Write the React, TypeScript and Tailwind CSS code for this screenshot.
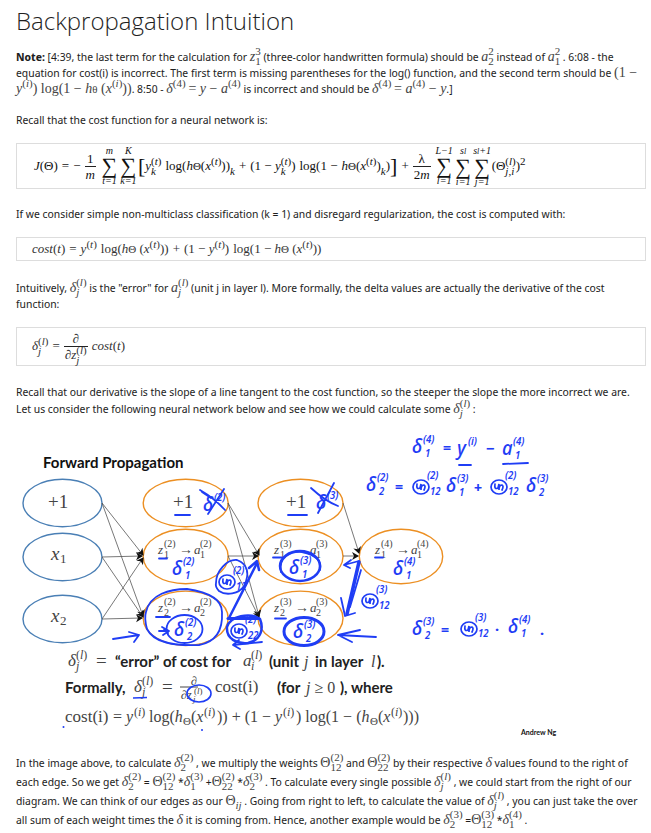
import React from "react";

const INK = "#1f3df5";
const MATH = '"Liberation Serif", serif';
const HAND = '"Noto Sans Display", "Open Sans", sans-serif';

/* ---------- inline maths ---------- */

function M({ children }: { children: React.ReactNode }) {
  return (
    <span className="whitespace-nowrap font-['Liberation_Serif',serif] text-[14px] leading-[0px] text-[#444]">{children}</span>
  );
}

function Scripts({ sup, sub }: { sup?: React.ReactNode; sub?: React.ReactNode }) {
  return (
    <span className="inline-flex h-3 flex-col justify-center pb-[3px] align-middle font-['Liberation_Serif',serif] text-[11px] leading-[10px]">
      <span className="h-[10px] shrink-0">{sup}</span>
      <span className="h-[10px] shrink-0">{sub}</span>
    </span>
  );
}

const L = (
  <>
    (<i>l</i>)
  </>
);
const T = (
  <>
    (<i>t</i>)
  </>
);
const I = (
  <>
    (<i>i</i>)
  </>
);

function Var({ v, sup, sub }: { v: string; sup?: React.ReactNode; sub?: React.ReactNode }) {
  return (
    <M>
      <i>{v}</i>
      <Scripts sup={sup} sub={sub} />
    </M>
  );
}

function Theta({ sup, sub }: { sup?: React.ReactNode; sub?: React.ReactNode }) {
  return (
    <M>
      Θ<Scripts sup={sup} sub={sub} />
    </M>
  );
}

function Small({ children }: { children: React.ReactNode }) {
  return <span className="text-[11px]">{children}</span>;
}

function Sum({ top, bottom }: { top: React.ReactNode; bottom: React.ReactNode }) {
  return (
    <span className="flex w-[19px] flex-col items-center whitespace-nowrap text-[10px] leading-[10px]">
      <i>{top}</i>
      <span className="text-[22px] leading-[20px]">∑</span>
      <i>{bottom}</i>
    </span>
  );
}

function Frac({ top, bottom }: { top: React.ReactNode; bottom: React.ReactNode }) {
  return (
    <span className="flex flex-col items-center leading-[15px]">
      <span className="w-full border-b border-[#222] text-center">{top}</span>
      <span className="px-px">{bottom}</span>
    </span>
  );
}

function Box({ children }: { children: React.ReactNode }) {
  return (
    <div className="flex items-center border border-[#ddd] pl-[15px] font-['Liberation_Serif',serif] whitespace-nowrap">
      {children}
    </div>
  );
}

/* ---------- slide drawing ---------- */

type P = { x: number; y: number };

function Printed({ x, y, v, sup, sub, large }: P & { v: string; sup: React.ReactNode; sub: string; large?: boolean }) {
  const dx = large ? 8 : 6;
  return (
    <g fill="#444" fontFamily={MATH}>
      <text x={x} y={y} fontSize={large ? 17 : 13} fontStyle="italic">{v}</text>
      <text x={x + dx} y={y - 7} fontSize={large ? 12 : 10}>{sup}</text>
      <text x={x + dx} y={y + 4} fontSize={large ? 12 : 10} fontStyle={large ? "italic" : "normal"}>{sub}</text>
    </g>
  );
}

function Unit({ x, y, layer, n }: P & { layer: string; n: string }) {
  return (
    <g>
      <Printed x={x} y={y} v="z" sup={layer} sub={n} />
      <text x={x + 21} y={y} fontSize={14} fill="#444" fontFamily={MATH}>→</text>
      <Printed x={x + 36} y={y} v="a" sup={layer} sub={n} />
    </g>
  );
}

function Hand({ x, y, v = "δ", sup, sub }: P & { v?: string; sup: string; sub?: string }) {
  return (
    <g fill={INK} fontFamily={HAND} fontStyle="italic" fontWeight={600}>
      <text x={x} y={y} fontSize={19} fontWeight={500}>{v}</text>
      <text x={x + 11} y={y - 10} fontSize={10}>{sup}</text>
      {sub && <text x={x + 13} y={y + 4} fontSize={10}>{sub}</text>}
    </g>
  );
}

function HandTheta({ x, y, sup, sub }: P & { sup: string; sub: string }) {
  return (
    <g fill={INK} fontFamily={HAND} fontStyle="italic" fontWeight={600}>
      <ellipse cx={x} cy={y} rx={8} ry={7} fill="none" stroke={INK} strokeWidth={1.7} />
      <path
        d={`M${x - 4} ${y - 3} q-1 6 3 4 l1 -4 l0 6 q0 -5 3 -5 q2 1 0 5`}
        fill="none"
        stroke={INK}
        strokeWidth={1.7}
        strokeLinecap="round"
      />
      <text x={x + 6} y={y - 8} fontSize={10}>{sup}</text>
      <text x={x + 9} y={y + 8} fontSize={10}>{sub}</text>
    </g>
  );
}

const wires = [
  [102, 503, 143, 555], [102, 503, 143, 616], [102, 557, 142, 556], [102, 557, 143, 617],
  [102, 619, 143, 558], [102, 619, 142, 618], [228, 503, 259, 555], [228, 503, 259, 616],
  [228, 556, 258, 556], [228, 556, 259, 617], [343, 503, 359, 553], [343, 556, 358, 556],
];

const supI = (
  <>
    (<tspan fontStyle="italic">i</tspan>)
  </>
);
const supL = (
  <>
    (<tspan fontStyle="italic">l</tspan>)
  </>
);

function Slide() {
  return (
    <svg viewBox="16 424 630 318" className="mt-[7px] block w-full" role="img" aria-label="Forward propagation network">
      <defs>
        <marker id="head" markerWidth="10" markerHeight="10" refX="7" refY="5" orient="auto" markerUnits="userSpaceOnUse">
          <path d="M1 1 L8 5 L1 9 L3 5 Z" fill="#111" />
        </marker>
      </defs>
      <text x={43} y={468} fontFamily="Lato, sans-serif" fontWeight={700} fontSize={15} fill="#111">Forward Propagation</text>

      <g fill="none" strokeWidth={1.4}>
        {[503, 557, 619].map((y) => (
          <ellipse key={y} cx={62.5} cy={y} rx={39.5} ry={23.7} stroke="#4a7fb5" />
        ))}
        <g stroke="#ec8f22">
          {[185.7, 300.5].map((x) => (
            <g key={x}>
              <ellipse cx={x} cy={503} rx={42.5} ry={23.7} />
              <ellipse cx={x} cy={556.5} rx={42.5} ry={27.2} />
              <ellipse cx={x} cy={618.3} rx={42.5} ry={27.2} />
            </g>
          ))}
          <ellipse cx={401} cy={556.5} rx={41.7} ry={27.2} />
        </g>
      </g>
      <g stroke="#555" strokeWidth={0.8}>
        {wires.map(([a, b, c, d], i) => (
          <line key={i} x1={a} y1={b} x2={c} y2={d} markerEnd="url(#head)" />
        ))}
      </g>

      <g fill="#444" fontFamily={MATH} fontSize={19}>
        <text x={48} y={508}>+1</text>
        <text x={173} y={508}>+1</text>
        <text x={286} y={508}>+1</text>
        <text x={51} y={560} fontStyle="italic">x</text>
        <text x={60} y={563} fontSize={13}>1</text>
        <text x={51} y={622} fontStyle="italic">x</text>
        <text x={60} y={625} fontSize={13}>2</text>
      </g>
      <Unit x={158} y={554} layer="(2)" n="1" />
      <Unit x={158} y={612} layer="(2)" n="2" />
      <Unit x={274} y={554} layer="(3)" n="1" />
      <Unit x={274} y={612} layer="(3)" n="2" />
      <Unit x={375} y={554} layer="(4)" n="1" />

      <g fill="none" stroke={INK} strokeWidth={1.8} strokeLinecap="round" strokeLinejoin="round">
        <path d="M175 515 H190 M288 515 H307 M159 558.500 H167 M156 617 H170 M273 557.500 H282 M275 618.500 H286 M375 557.500 H383" />
        {/* crossed-out bias terms */}
        <path d="M200 490 Q214 498 225 510 M202 492 L211 498 M224 489 L208 514 M311 488 Q325 501 338 506 M334 483 L318 513" />
        {/* second hidden unit */}
        <path d="M146 612 C150 594 170 589 187 589 C207 592 222 599 222 612 C223 631 216 642 199 645 C174 646 154 643 147 629 Q144 618 146 612" />
        <ellipse cx={184.5} cy={629} rx={18} ry={14} />
        <path d="M159 631 H169 M162 627 L169 631 L163 635 M164 629 L168 633" />
        <path d="M113 639 L139 635 M129 632 L139 635 L134 642" />
        {/* weights between the hidden layers */}
        <path d="M216 583 C216 571 227 559 237 560 C248 564 250 574 244 586 C239 594 226 596 219 591 Q215 587 216 583" />
        <path d="M229 618 L257 563 M249 568 L257 561 L259 570" strokeWidth={2.5} />
        <path d="M228 618.500 H259" strokeWidth={3} />
        <path d="M227 627 C230 616 250 612 260 619 C264 629 261 640 248 643 C237 644 226 639 227 627" strokeWidth={2.5} />
        <path d="M262 642 L233 645 M239 640 L233 645 L240 649" />
        {/* third layer */}
        <ellipse cx={300} cy={566} rx={20} ry={15} strokeWidth={2.5} />
        <path d="M281 572 C278 558 290 551 302 552 C317 555 322 562 320 570" />
        <ellipse cx={304} cy={631.5} rx={20} ry={14} strokeWidth={3} />
        <path d="M359 562 L347 614" strokeWidth={3.5} />
        <path d="M341 598 L345 616 L355 613 M344 565 L359 561 M351 560 L344 565 L350 568 M361 570 L350 607" />
        <path d="M376 637 L338 635 M360 630 L338 635 L352 642" />
        {/* worked equations */}
        <path d="M459 465 H471 M503 464 L528 463" />
      </g>

      <Hand x={203} y={511} sup="(2)" />
      <Hand x={316} y={509} sup="(3)" />
      <Hand x={172} y={575} sup="(2)" sub="1" />
      <Hand x={174} y={636} sup="(2)" sub="2" />
      <Hand x={289} y={574} sup="(3)" sub="1" />
      <Hand x={293} y={638} sup="(3)" sub="2" />
      <Hand x={393} y={575} sup="(4)" sub="1" />
      <HandTheta x={227} y={582} sup="(2)" sub="12" />
      <HandTheta x={239} y={631} sup="(2)" sub="22" />
      <HandTheta x={370} y={601} sup="(3)" sub="12" />

      <Hand x={412} y={453} sup="(4)" sub="1" />
      <Hand x={457} y={455} v="y" sup="(i)" />
      <Hand x={502} y={455} v="a" sup="(4)" sub="1" />
      <Hand x={366} y={491} sup="(2)" sub="2" />
      <HandTheta x={421} y={487} sup="(2)" sub="12" />
      <Hand x={446} y={492} sup="(3)" sub="1" />
      <HandTheta x={499} y={487} sup="(2)" sub="12" />
      <Hand x={526} y={492} sup="(3)" sub="2" />
      <Hand x={412} y={635} sup="(3)" sub="2" />
      <HandTheta x={469} y={629} sup="(3)" sub="12" />
      <Hand x={508} y={633} sup="(4)" sub="1" />
      <g fill={INK} fontFamily={HAND} fontWeight={700} fontSize={15}>
        <text x={443} y={453}>=</text>
        <text x={486} y={454}>−</text>
        <text x={395} y={492}>=</text>
        <text x={474} y={493}>+</text>
        <text x={441} y={635}>=</text>
        <text x={495} y={631}>.</text>
        <text x={540} y={635}>.</text>
      </g>

      {/* definitions under the network */}
      <g fontFamily="Lato, sans-serif" fontWeight={700} fontSize={15} fill="#222">
        <text x={115} y={667}>“error” of cost for</text>
        <text x={269} y={667}>(unit</text>
        <text x={315} y={667}>in layer</text>
        <text x={377} y={667}>).</text>
        <text x={65} y={693}>Formally,</text>
        <text x={277} y={693}>(for</text>
        <text x={340} y={693}>), where</text>
      </g>
      <g fontFamily={MATH} fontSize={16} fill="#444">
        <text x={96} y={667} fontSize={19}>=</text>
        <text x={304} y={667} fontStyle="italic">j</text>
        <text x={371} y={667} fontStyle="italic">l</text>
        <text x={162} y={693} fontSize={19}>=</text>
        <text x={215} y={692} fontSize={17}>cost(i)</text>
        <text x={306} y={693}><tspan fontStyle="italic">j</tspan> ≥ 0</text>
        <text x={191} y={685} fontSize={12}>∂</text>
        <text x={181} y={699} fontSize={12}>∂<tspan fontStyle="italic">z</tspan></text>
        <text x={194} y={694} fontSize={9}>{supL}</text>
        <text x={193} y={702} fontSize={9} fontStyle="italic">j</text>
        <text x={65} y={722} fontSize={17}>cost(i)</text>
        <text x={113} y={722}>=</text>
        <text x={126} y={722} fontStyle="italic">y</text>
        <text x={134} y={716} fontSize={12}>{supI}</text>
        <text x={149} y={722}>log(<tspan fontStyle="italic">h</tspan></text>
        <text x={183} y={725} fontSize={11}>Θ</text>
        <text x={191} y={722}>(<tspan fontStyle="italic">x</tspan></text>
        <text x={204} y={716} fontSize={12}>{supI}</text>
        <text x={217} y={722}>)) + (1 − <tspan fontStyle="italic">y</tspan></text>
        <text x={283} y={716} fontSize={12}>{supI}</text>
        <text x={296} y={722}>) log(1 − (<tspan fontStyle="italic">h</tspan></text>
        <text x={370} y={725} fontSize={11}>Θ</text>
        <text x={378} y={722}>(<tspan fontStyle="italic">x</tspan></text>
        <text x={391} y={716} fontSize={12}>{supI}</text>
        <text x={403} y={722}>)))</text>
      </g>
      <Printed x={68} y={666} v="δ" sup={supL} sub="j" large />
      <Printed x={243} y={666} v="a" sup={supL} sub="i" large />
      <Printed x={134} y={692} v="δ" sup={supL} sub="j" large />
      <line x1={180} y1={687} x2={198} y2={687} stroke="#444" />
      <path d="M133 698 L147 697.500" stroke={INK} strokeWidth={1.3} />
      <ellipse cx={199} cy={693.5} rx={12} ry={8.5} fill="none" stroke={INK} strokeWidth={1.6} />
      <circle cx={63.5} cy={727} r={1} fill={INK} />
      <circle cx={202} cy={730} r={1} fill={INK} />
      <text x={521} y={735} fontFamily="Lato, sans-serif" fontWeight={700} fontSize={7} fill="#111">Andrew Ng</text>
    </svg>
  );
}

export default function App() {
  return (
    <main className="bg-white pt-[5px] pr-[5px] pb-1 pl-4 font-['Noto_Sans_Display','Open_Sans',sans-serif] text-[11px] leading-4 text-[#1f1f1f]">
      <h1 className="font-['Open_Sans',sans-serif] text-2xl leading-8 font-light">Backpropagation Intuition</h1>

      <p className="mt-3">
        <b>Note:</b> [4:39, the last term for the calculation for <Var v="z" sup="3" sub="1" /> (three-color handwritten
        formula) should be <Var v="a" sup="2" sub="2" /> instead of <Var v="a" sup="2" sub="1" /> . 6:08 - the
        <br />
        equation for cost(i) is incorrect. The first term is missing parentheses for the log() function, and the second
        term should be <M>(1 −</M>
        <br />
        <M>
          <i>y</i>
          <Scripts sup={I} />) log(1 − <i>h</i>
          <Small>θ</Small> (<i>x</i>
          <Scripts sup={I} />))
        </M>
        . 8:50 - <Var v="δ" sup="(4)" />{" "}
        <M>
          {" "}= <i>y</i> − <i>a</i>
          <Scripts sup="(4)" />
        </M>{" "}
        is incorrect and should be <Var v="δ" sup="(4)" />{" "}
        <M>
          = <i>a</i>
          <Scripts sup="(4)" /> − <i>y</i>
        </M>
        .]
      </p>

      <p className="mt-[15px]">Recall that the cost function for a neural network is:</p>

      <div className="mt-[15px] [&>div]:h-[46px]">
        <Box>
          <span className="flex items-center gap-1 pl-[2px] text-[13px] text-[#111]">
            <span><i>J</i>(Θ)</span>
            <span>=</span>
            <span>−</span>
            <Frac top="1" bottom={<i>m</i>} />
            <span className="flex items-center">
              <Sum top="m" bottom="t=1" />
              <Sum top="K" bottom="k=1" />
              <span className="text-[22px] leading-5 font-light">[</span>
              <span><i>y</i><Scripts sup={T} sub={<i>k</i>} /></span>
            </span>
            <span>
              log(<i>h</i>
              <Small>Θ</Small>(<i>x</i>
              <Scripts sup={T} />))
              <Scripts sub={<i>k</i>} />
            </span>
            <span>+</span>
            <span>(1 − <i>y</i><Scripts sup={T} sub={<i>k</i>} />)</span>
            <span>log(1 −</span>
            <span className="flex items-center">
              <span>
                <i>h</i>
                <Small>Θ</Small>(<i>x</i>
                <Scripts sup={T} />)<Scripts sub={<i>k</i>} />)
              </span>
              <span className="text-[22px] leading-5">]</span>
            </span>
            <span>+</span>
            <Frac top="λ" bottom={<>2<i>m</i></>} />
            <span className="flex items-center">
              <Sum top="L−1" bottom="l=1" />
              <Sum top={<>s<span className="text-[8px]">l</span></>} bottom="i=1" />
              <Sum top={<>s<span className="text-[8px]">l</span>+1</>} bottom="j=1" />
              <span>(Θ<Scripts sup={L} sub={<i>j,i</i>} />)<Scripts sup="2" /></span>
            </span>
          </span>
        </Box>
      </div>

      <p className="mt-[17px]">
        If we consider simple non-multiclass classification (k = 1) and disregard regularization, the cost is computed
        with:
      </p>

      <div className="mt-[15px] [&>div]:h-6">
        <Box>
          <span className="flex gap-1 text-[13px] text-[#333]">
            <span><i>cost</i>(<i>t</i>)</span>
            <span>=</span>
            <span><i>y</i><Scripts sup={T} /></span>
            <span>
              log(<i>h</i>
              <Small>Θ</Small> (<i>x</i>
              <Scripts sup={T} />))
            </span>
            <span>+</span>
            <span>(1 − <i>y</i><Scripts sup={T} />)</span>
            <span>
              log(1 − <i>h</i>
              <Small>Θ</Small> (<i>x</i>
              <Scripts sup={T} />))
            </span>
          </span>
        </Box>
      </div>

      <p className="mt-[19px]">
        Intuitively, <Var v="δ" sup={L} sub={<i>j</i>} /> is the "error" for <Var v="a" sup={L} sub={<i>j</i>} /> (unit
        j in layer l). More formally, the delta values are actually the derivative of the cost
        <br />
        function:
      </p>

      <div className="mt-[15px] [&>div]:h-[39px]">
        <Box>
          <span className="flex items-center gap-1 text-[13px] text-[#333]">
            <span><i>δ</i><Scripts sup={L} sub={<i>j</i>} /></span>
            <span>=</span>
            <Frac top="∂" bottom={<>∂<i>z</i><Scripts sup={L} sub={<i>j</i>} /></>} />
            <span><i>cost</i>(<i>t</i>)</span>
          </span>
        </Box>
      </div>

      <p className="mt-[17px] leading-[17px]">
        Recall that our derivative is the slope of a line tangent to the cost function, so the steeper the slope the more
        incorrect we are.
        <br />
        Let us consider the following neural network below and see how we could calculate some{" "}
        <Var v="δ" sup={L} sub={<i>j</i>} /> :
      </p>

      <Slide />

      <p className="mt-[11px] leading-[19px]">
        In the image above, to calculate <Var v="δ" sup="(2)" sub="2" /> , we multiply the weights{" "}
        <Theta sup="(2)" sub="12" /> and <Theta sup="(2)" sub="22" /> by their respective <M><i>δ</i></M> values found
        to the right of
        <br />
        each edge. So we get <Var v="δ" sup="(2)" sub="2" /> = <Theta sup="(2)" sub="12" /> *
        <Var v="δ" sup="(3)" sub="1" /> +<Theta sup="(2)" sub="22" /> *<Var v="δ" sup="(3)" sub="2" /> . To calculate
        every single possible <Var v="δ" sup={L} sub={<i>j</i>} /> , we could start from the right of our
        <br />
        diagram. We can think of our edges as our <Theta sub={<i>ij</i>} /> . Going from right to left, to calculate the
        value of <Var v="δ" sup={L} sub={<i>j</i>} /> , you can just take the over
        <br />
        all sum of each weight times the <M><i>δ</i></M> it is coming from. Hence, another example would be{" "}
        <Var v="δ" sup="(3)" sub="2" /> =<Theta sup="(3)" sub="12" /> *<Var v="δ" sup="(4)" sub="1" /> .
      </p>
    </main>
  );
}
